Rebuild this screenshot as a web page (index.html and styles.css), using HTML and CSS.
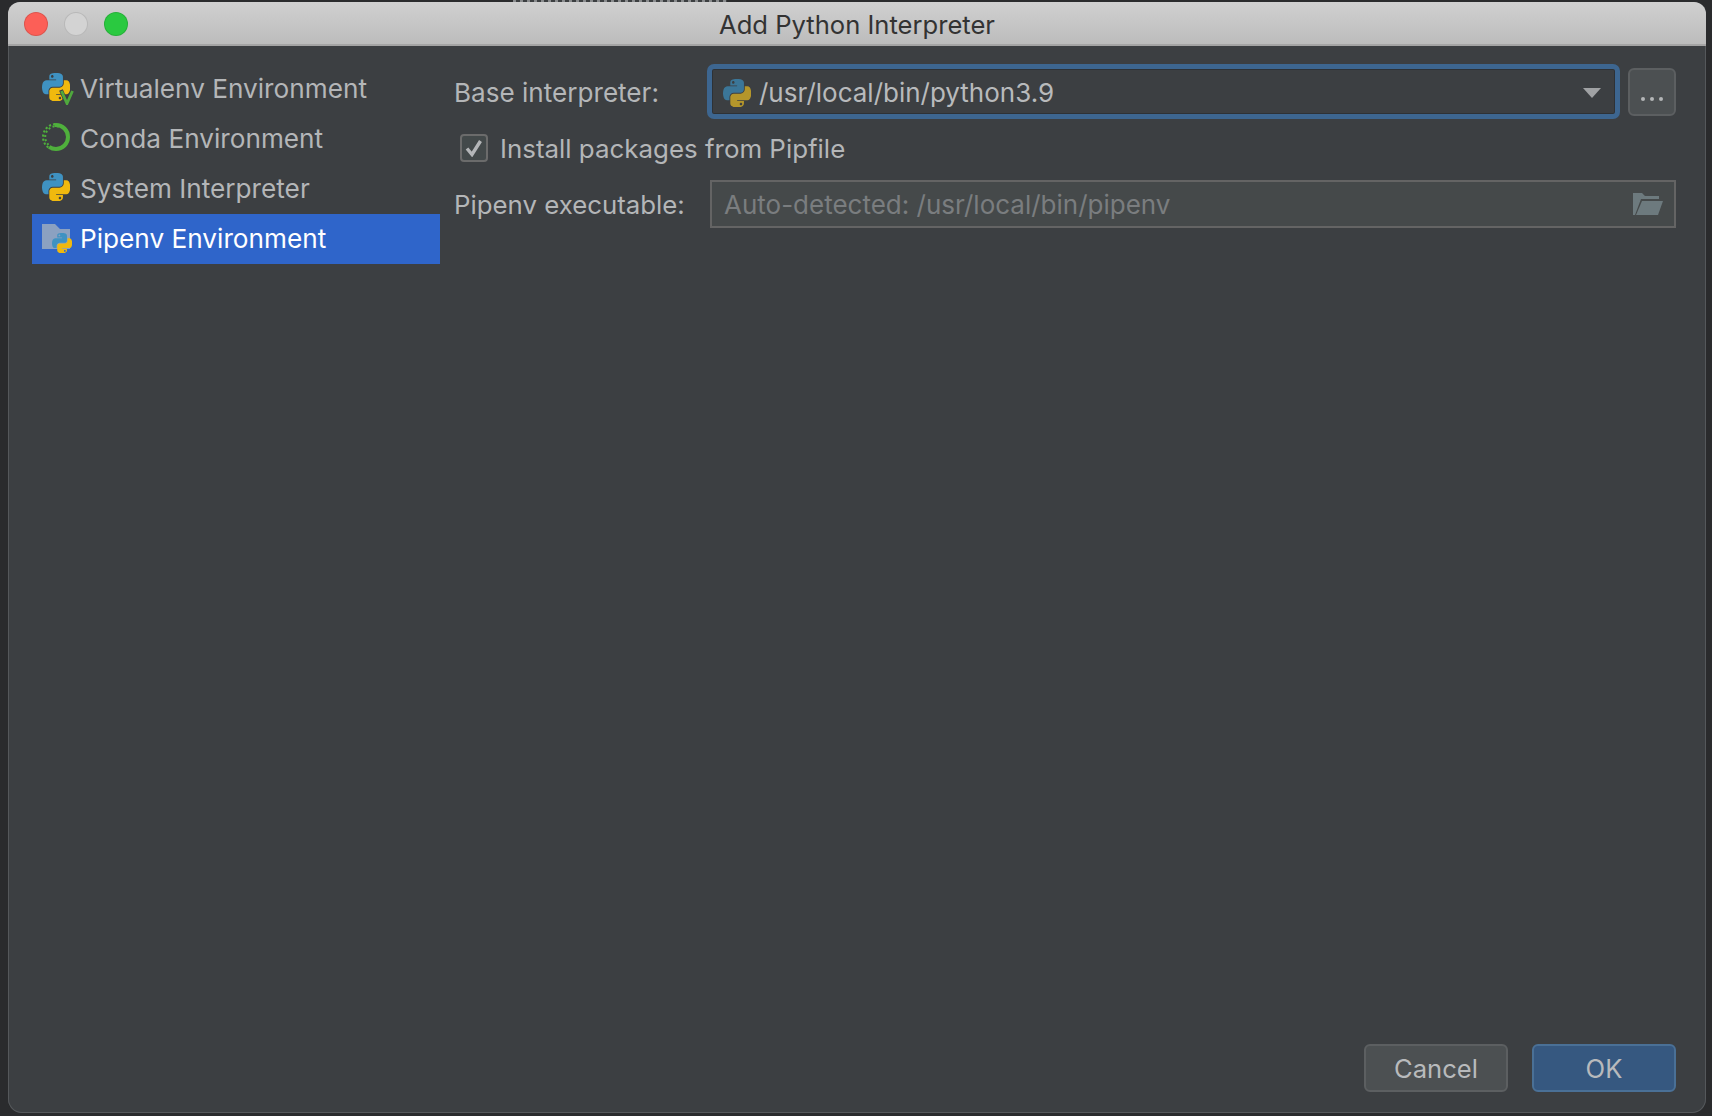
FILE: index.html
```html
<!DOCTYPE html>
<html lang="en">
  <head>
    <meta charset="UTF-8" />
    <title>Add Python Interpreter</title>
    <link rel="stylesheet" href="styles.css">
  </head>
  <body>
    <svg class="defs" width="0" height="0">
      <symbol id="python" viewBox="0 0 110 110">
        <path class="py-blue" d="M54.919 0.001c-4.584.022-8.961.413-12.813 1.095C30.76 3.099 28.7 7.295 28.7 15.032v10.219h26.813v3.406H18.638c-7.793 0-14.616 4.684-16.75 13.594-2.462 10.213-2.571 16.586 0 27.25 1.906 7.938 6.457 13.594 14.25 13.594h9.219v-12.25c0-8.85 7.657-16.656 16.75-16.656h26.781c7.454 0 13.406-6.138 13.406-13.625V15.032c0-7.266-6.13-12.725-13.406-13.937C64.282.328 59.502-.02 54.919.001zM40.419 8.219c2.77 0 5.031 2.299 5.031 5.125 0 2.816-2.262 5.094-5.031 5.094-2.78 0-5.031-2.278-5.031-5.094 0-2.826 2.252-5.125 5.031-5.125z" />
        <path class="py-yellow" d="M85.638 28.657v11.906c0 9.231-7.826 17-16.75 17H42.106c-7.336 0-13.406 6.278-13.406 13.625v25.531c0 7.266 6.319 11.54 13.406 13.625 8.487 2.496 16.626 2.947 26.781 0 6.75-1.954 13.406-5.888 13.406-13.625V86.501H55.513v-3.406h40.188c7.793 0 10.696-5.436 13.406-13.594 2.8-8.399 2.68-16.476 0-27.25-1.926-7.757-5.604-13.594-13.406-13.594zM70.575 93.313c2.78 0 5.031 2.278 5.031 5.094 0 2.826-2.252 5.125-5.031 5.125-2.77 0-5.031-2.299-5.031-5.125 0-2.816 2.262-5.094 5.031-5.094z" />
      </symbol>
    </svg>

    <!-- bit of the editor behind the dialog, sticks out above the window -->
    <div class="behind"></div>

    <div class="window">
      <div class="titlebar">
        <div class="lights">
          <span class="light light-close"></span>
          <span class="light light-min"></span>
          <span class="light light-max"></span>
        </div>
        <div class="title">Add Python Interpreter</div>
      </div>

      <div class="content">
        <div class="main">
          <ul class="sidebar">
            <li class="side-item">
              <svg class="side-icon" viewBox="0 0 32 32">
                <use href="#python" width="28" height="28" />
                <polyline points="19,17 25,31 31,17" fill="none" stroke="#3c3f42" stroke-width="4" />
                <polyline points="19.5,18 25,30.5 30.5,18" fill="none" stroke="#4fa83d" stroke-width="2.8" />
              </svg>
              Virtualenv Environment
            </li>
            <li class="side-item">
              <svg class="side-icon" viewBox="0 0 32 32">
                <circle cx="14" cy="14" r="12" fill="none" stroke="#4fb03c" stroke-width="4" stroke-dasharray="47 28.4" stroke-dashoffset="21" />
                <circle cx="14" cy="14" r="13" fill="none" stroke="#4fb03c" stroke-width="2" stroke-dasharray="2.2 2 2.2 2 2.2 2 2.2 2 2.2 2 2.2 2 2.2 2 2.2 52" stroke-dashoffset="-28.4" />
                <circle cx="14" cy="14" r="10.8" fill="none" stroke="#4fb03c" stroke-width="2" stroke-dasharray="2 2.4 2 2.4 2 2.4 2 2.4 2 2.4 2 2.4 2 40" stroke-dashoffset="-25" />
              </svg>
              Conda Environment
            </li>
            <li class="side-item">
              <svg class="side-icon" viewBox="0 0 32 32">
                <use href="#python" width="28" height="28" />
              </svg>
              System Interpreter
            </li>
            <li class="side-item side-item-active">
              <svg class="side-icon" viewBox="0 0 32 32">
                <path d="M0 1h13l5 5h10v20H0z" fill="#8ba1c1" />
                <use href="#python" x="10" y="10" width="20" height="20" />
              </svg>
              Pipenv Environment
            </li>
          </ul>

          <div class="form">
            <div class="form-row">
              <label class="form-label form-label-base">Base interpreter:</label>
              <div class="combo">
                <svg class="combo-icon" width="28" height="28">
                  <use href="#python" width="28" height="28" />
                </svg>
                <span class="combo-text">/usr/local/bin/python3.9</span>
                <span class="combo-arrow"></span>
              </div>
              <button class="more-btn"><span></span><span></span><span></span></button>
            </div>

            <label class="check-row">
              <span class="checkbox">
                <svg width="18" height="18" viewBox="0 0 18 18">
                  <polyline points="2,9.5 7,15.5 15.5,2" fill="none" stroke="#b4b6b8" stroke-width="3.4" />
                </svg>
              </span>
              Install packages from Pipfile
            </label>

            <div class="form-row">
              <label class="form-label">Pipenv executable:</label>
              <div class="path-field">
                <span class="path-text">Auto-detected: /usr/local/bin/pipenv</span>
                <svg class="folder-icon" width="30" height="22" viewBox="0 0 30 22">
                  <path d="M0 0h9l3 3h14v3H8L2 22H0z" fill="#6d7a7e" />
                  <path d="M9 8h21l-5 14H3z" fill="#6d7a7e" />
                </svg>
              </div>
            </div>
          </div>
        </div>

        <div class="footer">
          <button class="btn">Cancel</button>
          <button class="btn btn-primary">OK</button>
        </div>
      </div>
    </div>
  </body>
</html>
```

FILE: styles.css
```css
* {
  margin: 0;
  padding: 0;
  box-sizing: border-box;
}
html,
body {
  height: 100%;
}
body {
  font-family: "Inter", "Liberation Sans", sans-serif;
  background-color: #2a2b2d;
  padding: 2px 6px 3px 8px;
  overflow: hidden;
}
.defs {
  position: absolute;
}
.behind {
  position: absolute;
  top: 0;
  left: 513px;
  width: 214px;
  height: 2px;
  background: repeating-linear-gradient(90deg, #8a8c8e 0 3px, #3c3f41 3px 7px);
}
.py-blue {
  fill: var(--py-blue, #3f92c2);
}
.py-yellow {
  fill: var(--py-yellow, #f0b90e);
}
.window {
  height: 100%;
  display: flex;
  flex-direction: column;
  border-radius: 12px 12px 14px 14px;
  overflow: hidden;
  background-color: #3c3f42;
  box-shadow: inset 0 0 0 1px #55585b;
}
.titlebar {
  height: 44px;
  flex-shrink: 0;
  position: relative;
  display: flex;
  align-items: center;
  justify-content: center;
  padding-top: 2px;
  background: linear-gradient(#d0d0d0, #bcbcbc);
  border-bottom: 2px solid #a4a4a4;
}
.lights {
  position: absolute;
  left: 16px;
  top: 10px;
  display: flex;
  gap: 16px;
}
.light {
  width: 24px;
  height: 24px;
  border-radius: 50%;
  border: 1px solid rgba(0, 0, 0, 0.12);
}
.light-close {
  background-color: #fc5f57;
}
.light-min {
  background-color: #d3d3d3;
}
.light-max {
  background-color: #2ac940;
}
.title {
  font-size: 25.6px;
  color: #333;
}
.content {
  flex: 1;
  display: flex;
  flex-direction: column;
  justify-content: space-between;
  padding: 17px 30px 21px 24px;
}
.main {
  display: flex;
}

.sidebar {
  list-style: none;
  width: 408px;
  margin-top: 1px;
  flex-shrink: 0;
}
.side-item {
  height: 50px;
  display: flex;
  align-items: center;
  gap: 7px;
  padding: 0 0 2px 10px;
  font-size: 26.2px;
  color: #b4b6b8;
}
.side-item-active {
  background-color: #2f65ca;
  color: #fff;
}
.side-icon {
  width: 32px;
  height: 32px;
  flex-shrink: 0;
  margin: 2px -1px 0 0;
}

.form {
  flex: 1;
  padding: 1px 0 0 14px;
}
.form-row {
  display: flex;
  align-items: center;
}
.form-label {
  width: 253px;
  font-size: 25.8px;
  color: #b4b6b8;
  flex-shrink: 0;
}
.form-label-base {
  font-size: 26.1px;
  padding-top: 2px;
}
.combo {
  flex: 1;
  height: 55px;
  display: flex;
  align-items: center;
  padding: 2px 14px 0 11px;
  background-color: #3c3f42;
  border: 5px solid #3d6690;
  border-radius: 7px;
  box-shadow: inset 0 0 0 1px #2e3236;
  --py-blue: #3b7698;
  --py-yellow: #b4962b;
}
.combo-icon {
  flex-shrink: 0;
}
.combo-text {
  flex: 1;
  margin-left: 8px;
  font-size: 26px;
  color: #b8babc;
}
.combo-arrow {
  width: 0;
  height: 0;
  border-left: 9px solid transparent;
  border-right: 9px solid transparent;
  border-top: 10px solid #a0a2a4;
}
.more-btn {
  width: 48px;
  height: 48px;
  margin-left: 8px;
  flex-shrink: 0;
  display: flex;
  align-items: flex-end;
  justify-content: center;
  gap: 5px;
  padding-bottom: 13px;
  background-color: #4c5052;
  border: 2px solid #5c5f61;
  border-radius: 6px;
}
.more-btn span {
  width: 4px;
  height: 4px;
  border-radius: 50%;
  background-color: #b4b6b8;
}

.check-row {
  display: flex;
  align-items: center;
  gap: 12px;
  height: 28px;
  margin: 15px 0 18px 6px;
  font-size: 25.9px;
  color: #b4b6b8;
}
.checkbox {
  width: 28px;
  height: 28px;
  display: flex;
  align-items: center;
  justify-content: center;
  background-color: #43494a;
  border: 2px solid #6b6b6b;
  border-radius: 4px;
}
.path-field {
  flex: 1;
  height: 48px;
  margin-left: 3px;
  display: flex;
  align-items: center;
  justify-content: space-between;
  padding: 0 11px 0 12px;
  background-color: #45494a;
  border: 2px solid #646464;
}
.path-text {
  font-size: 26px;
  color: #7a7d7f;
}

.footer {
  display: flex;
  justify-content: flex-end;
  gap: 24px;
}
.btn {
  width: 144px;
  height: 48px;
  font-family: inherit;
  font-size: 25.6px;
  color: #b8babc;
  background-color: #4c5052;
  border: 2px solid #5c5f61;
  border-radius: 6px;
}
.btn-primary {
  background-color: #365880;
  border-color: #4a7096;
}
```
